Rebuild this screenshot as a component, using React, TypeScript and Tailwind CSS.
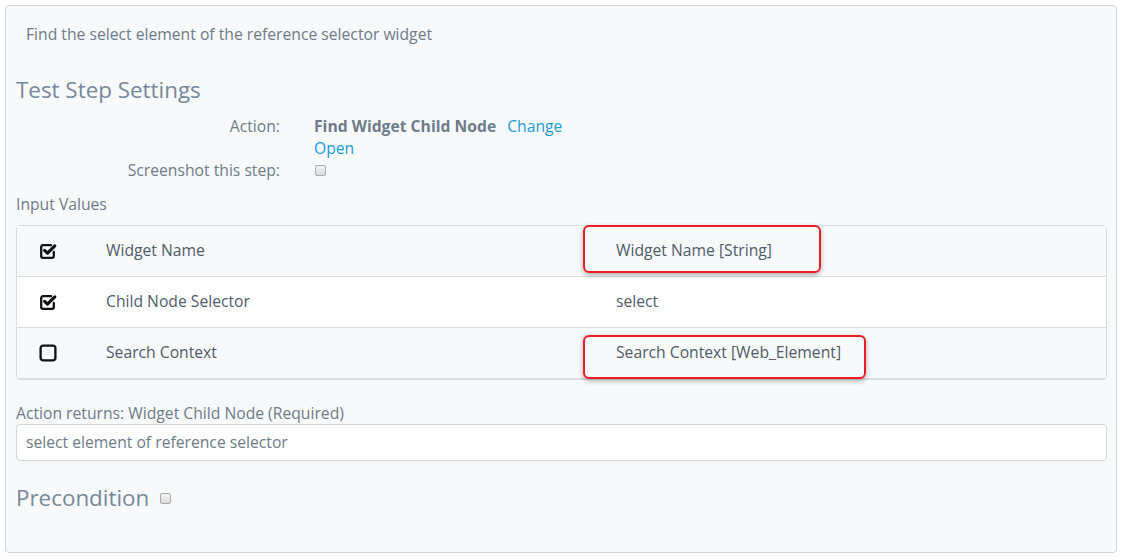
import React from 'react';

const font = { fontFamily: '"Open Sans", "Noto Sans", sans-serif' };

function CheckedIcon() {
  return (
    <svg viewBox="0 0 18 18" className="w-[18px] h-[18px]" fill="none" stroke="#111" strokeLinecap="round" strokeLinejoin="round">
      <path d="M12 3.2H3.9a1.7 1.7 0 0 0-1.7 1.7v9.2a1.7 1.7 0 0 0 1.7 1.7h9.2a1.7 1.7 0 0 0 1.7-1.7V10" strokeWidth="2.3" />
      <path d="M5.6 8.3l2.9 2.9 7.3-7.4" strokeWidth="3.1" />
    </svg>
  );
}

function EmptyIcon() {
  return (
    <svg viewBox="0 0 18 18" className="w-[18px] h-[18px]" fill="none" stroke="#111">
      <rect x="1.6" y="1.6" width="14.8" height="14.8" rx="2.6" strokeWidth="2.3" />
    </svg>
  );
}

function NativeBox() {
  return <span className="inline-block w-[11px] h-[11px] rounded-[2px] border border-[#a9a9a9] bg-gradient-to-b from-[#f4f4f4] to-[#dcdcdc]" />;
}

function Row({ checked, name, value, striped }: any) {
  return (
    <div className={`flex items-center h-[51px] ${striped ? 'bg-[#f8f9fb]' : 'bg-white'} border-b border-[#d8dbdf] last:border-b-0`}>
      <div className="w-[89px] pl-[22px] flex items-center">{checked ? <CheckedIcon /> : <EmptyIcon />}</div>
      <div className="w-[510px] text-[15.7px] text-[#4f5b69]">{name}</div>
      <div className="text-[15.7px] text-[#4f5b69]">{value}</div>
    </div>
  );
}

export default function App() {
  return (
    <div className="w-[1121px] h-[560px] bg-white pt-[5px] pl-[5px]" style={font}>
      <div className="w-[1112px] h-[548px] bg-[#f8f9fb] border border-[#d3d6da] rounded-[4px] px-[10px] pt-[18px]">
        <p className="pl-[10px] text-[15.7px] leading-[20px] text-[#6d7b8a]">Find the select element of the reference selector widget</p>

        <h2 className="mt-[31px] text-[22.4px] leading-[30px] text-[#76889a]">Test Step Settings</h2>

        <div className="mt-[10px] text-[15.7px] leading-[22px]">
          <div className="flex">
            <div className="w-[264px] text-right text-[#6d7b8a]">Action:</div>
            <div className="pl-[34px]">
              <span className="font-bold text-[#6d7b8a]">Find Widget Child Node</span>
              <span className="ml-[11px] text-[#1b9bd8]">Change</span>
              <div className="text-[#1b9bd8]">Open</div>
            </div>
          </div>
          <div className="flex items-center">
            <div className="w-[264px] text-right text-[#6d7b8a]">Screenshot this step:</div>
            <div className="pl-[35px] flex items-center"><NativeBox /></div>
          </div>
        </div>

        <div className="mt-[13px] text-[15.7px] leading-[20px] text-[#6d7b8a]">Input Values</div>

        <div className="relative mt-[11px] w-[1091px] border border-[#d8dbdf] rounded-[4px]">
          <Row checked striped name="Widget Name" value="Widget Name [String]" />
          <Row checked name="Child Node Selector" value="select" />
          <Row striped name="Search Context" value="Search Context [Web_Element]" />
          <div className="absolute left-[566px] top-[-1px] w-[238px] h-[48px] border-2 border-[#ec1c24] rounded-[6px] shadow-[0_2px_5px_rgba(0,0,0,0.3)]" />
          <div className="absolute left-[566px] top-[109px] w-[283px] h-[44px] border-2 border-[#ec1c24] rounded-[6px] shadow-[0_2px_5px_rgba(0,0,0,0.3)]" />
        </div>

        <div className="mt-[23px] text-[15.7px] leading-[20px] text-[#6d7b8a]">Action returns: Widget Child Node (Required)</div>
        <div className="mt-[1px] w-[1091px] h-[37px] bg-white border border-[#d3d6da] rounded-[4px] flex items-center pl-[9px] text-[15.7px] text-[#6d7b8a]">
          select element of reference selector
        </div>

        <div className="mt-[22px] flex items-center gap-[11px]">
          <h2 className="text-[22.4px] leading-[30px] text-[#76889a]">Precondition</h2>
          <NativeBox />
        </div>
      </div>
    </div>
  );
}
